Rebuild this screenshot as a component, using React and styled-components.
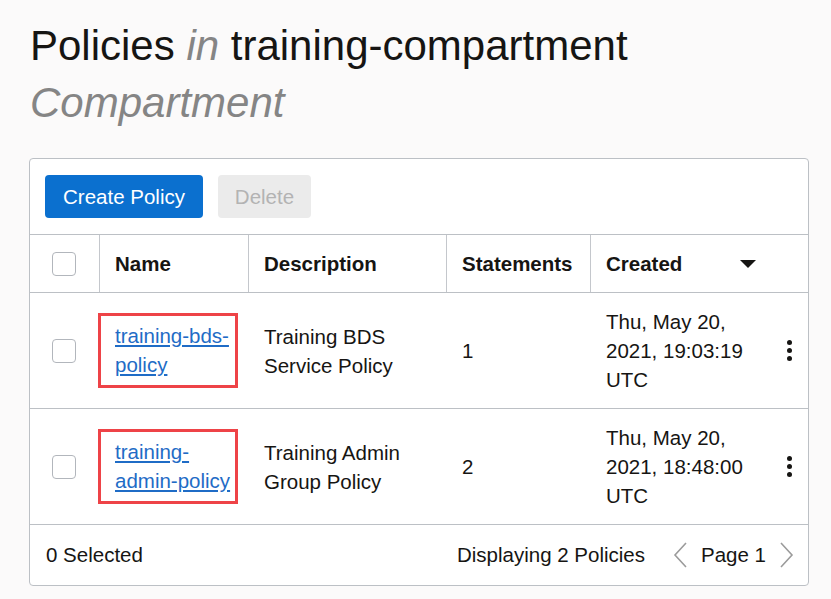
import React from 'react';
import styled, { createGlobalStyle } from 'styled-components';

const GlobalStyle = createGlobalStyle`
  html, body {
    margin: 0;
    padding: 0;
    background: #fbfafa;
    font-family: "Liberation Sans", Arial, sans-serif;
    color: #161513;
  }
`;

const policies = [
  { id: 1, name: 'training-bds-policy', description: 'Training BDS Service Policy', statements: 1, created: ['Thu, May 20,', '2021, 19:03:19', 'UTC'] },
  { id: 2, name: 'training-admin-policy', description: 'Training Admin Group Policy', statements: 2, created: ['Thu, May 20,', '2021, 18:48:00', 'UTC'] },
];

const COLUMNS = '69px 149px 198px 144px 1fr';

const Page = styled.div`
  padding: 17px 22px 0 29px;
`;

const Title = styled.h1`
  margin: 0 0 27px 1px;
  font-size: 42px;
  line-height: 57px;
  font-weight: 400;
  color: #161513;
`;

const Muted = styled.span`
  font-style: italic;
  color: #858585;
`;

const Card = styled.div`
  background: #fff;
  border: 1px solid #bcc0c5;
  border-radius: 4px;
`;

const Toolbar = styled.div`
  display: flex;
  gap: 15px;
  padding: 16px 15px 16px;
  border-bottom: 1px solid #bcc0c5;
`;

const Button = styled.button`
  height: 43px;
  padding: 0 16px;
  border: none;
  border-radius: 4px;
  font-family: inherit;
  font-size: 20.5px;
  background: ${p => (p.$primary ? '#0b70cf' : '#ebebeb')};
  color: ${p => (p.$primary ? '#fff' : '#b3b3b3')};
  min-width: ${p => (p.$primary ? '158px' : '93px')};
`;

const Row = styled.div`
  display: grid;
  grid-template-columns: ${COLUMNS};
  min-height: ${p => (p.$head ? '57px' : '115px')};
  border-bottom: 1px solid #bcc0c5;
`;

const HeadCell = styled.div`
  display: flex;
  align-items: center;
  padding: 0 14px 0 15px;
  font-weight: 700;
  font-size: 20.5px;
  border-left: 1px solid #c4c7cc;
`;

const Cell = styled.div`
  display: flex;
  align-items: center;
  padding: 0 14px 0 15px;
  font-size: 20.5px;
  line-height: 29px;
  border-left: 1px solid transparent;
`;

const CheckCell = styled.div`
  display: flex;
  align-items: center;
  padding-left: 22px;
`;

const Checkbox = styled.span`
  width: 22px;
  height: 22px;
  border: 1px solid #b2b6bc;
  border-radius: 4px;
  background: #fff;
`;

const Highlight = styled.div`
  box-sizing: border-box;
  flex-shrink: 0;
  width: 140px;
  margin-left: -17px;
  padding: 5px 0 6px 14px;
  border: 3px solid #ee4347;
`;

const PolicyLink = styled.a`
  color: #1f6cc6;
  text-decoration: underline;
  font-size: 20.5px;
  line-height: 29px;
`;

const Caret = styled.span`
  width: 0;
  height: 0;
  margin: 0 38px 0 auto;
  border-left: 8px solid transparent;
  border-right: 8px solid transparent;
  border-top: 8px solid #161513;
`;

const DateText = styled.div`
  width: 150px;
`;

const Kebab = styled.span`
  margin-left: auto;
  margin-right: 2px;
  display: flex;
  flex-direction: column;
  gap: 3px;
  span {
    width: 5px;
    height: 5px;
    border-radius: 50%;
    background: #161513;
  }
`;

const Footer = styled.div`
  display: flex;
  align-items: center;
  height: 60px;
  padding: 0 13px 0 16px;
  font-size: 20.5px;
`;

const Pager = styled.div`
  margin-left: auto;
  display: flex;
  align-items: center;
  gap: 13px;
`;

const PagerLabel = styled.span`
  margin-right: ${p => (p.$spaced ? '14px' : '0')};
`;

const Chevron = ({ dir }) => (
  <svg width="16" height="26" viewBox="0 0 16 26">
    <path
      d={dir === 'left' ? 'M14 1 L3 13 L14 25' : 'M2 1 L13 13 L2 25'}
      fill="none"
      stroke="#9b9b9b"
      strokeWidth="1.6"
    />
  </svg>
);

const App = () => (
  <>
    <GlobalStyle />
    <Page>
      <Title>
        Policies <Muted>in</Muted> training-compartment
        <br />
        <Muted>Compartment</Muted>
      </Title>

      <Card>
        <Toolbar>
          <Button $primary>Create Policy</Button>
          <Button>Delete</Button>
        </Toolbar>

        <Row $head>
          <CheckCell><Checkbox /></CheckCell>
          <HeadCell>Name</HeadCell>
          <HeadCell>Description</HeadCell>
          <HeadCell>Statements</HeadCell>
          <HeadCell>
            Created
            <Caret />
          </HeadCell>
        </Row>

        {policies.map(p => (
          <Row key={p.id}>
            <CheckCell><Checkbox /></CheckCell>
            <Cell>
              <Highlight>
                <PolicyLink href="#">{p.name}</PolicyLink>
              </Highlight>
            </Cell>
            <Cell>{p.description}</Cell>
            <Cell>{p.statements}</Cell>
            <Cell>
              <DateText>
                {p.created.map(line => <div key={line}>{line}</div>)}
              </DateText>
              <Kebab><span /><span /><span /></Kebab>
            </Cell>
          </Row>
        ))}

        <Footer>
          0 Selected
          <Pager>
            <PagerLabel $spaced>Displaying 2 Policies</PagerLabel>
            <Chevron dir="left" />
            <PagerLabel>Page 1</PagerLabel>
            <Chevron dir="right" />
          </Pager>
        </Footer>
      </Card>
    </Page>
  </>
);

export default App;
